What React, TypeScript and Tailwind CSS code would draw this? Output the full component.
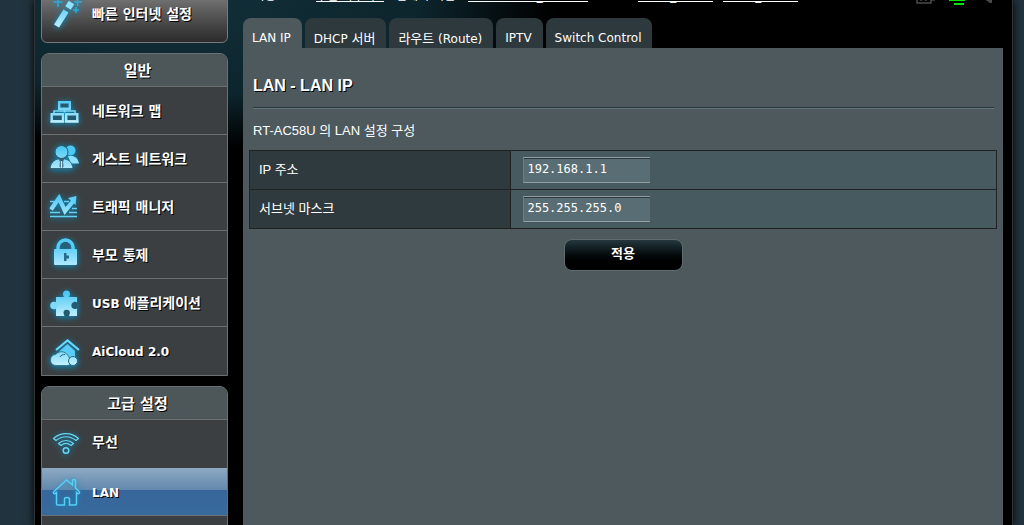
import { useState } from 'react'
import type { ReactNode } from 'react'
import clsx from 'clsx'

const textShadow = '[text-shadow:1px_1px_0_#000]'
const uiFont = "font-['DejaVu_Sans','Noto_Sans_CJK_KR',sans-serif]"
const bodyFont = "font-['Liberation_Sans','Noto_Sans_CJK_KR',sans-serif]"

function Icon({ children }: { children: ReactNode }) {
  return (
    <svg
      viewBox="0 0 32 32"
      className="h-8 w-8 shrink-0 overflow-visible [filter:drop-shadow(0_1px_3px_#0792c8)]"
      fill="none"
      aria-hidden="true"
    >
      <defs>
        <linearGradient id="glow" gradientUnits="userSpaceOnUse" x1="0" y1="2" x2="0" y2="30">
          <stop offset="0" stopColor="#3fc4f3" />
          <stop offset="1" stopColor="#c2f0ff" />
        </linearGradient>
      </defs>
      {children}
    </svg>
  )
}

const WandIcon = () => (
  <Icon>
    <path d="m7.500 28 9.500-15" stroke="url(#glow)" strokeWidth="6" />
    <path d="m19 10 3.500-5.500" stroke="#8fe0fb" strokeWidth="6.500" />
    <path d="M9 0v9M4.500 4h9M28.500 0v8M25 4h8M27 9v6M24 12h6" stroke="#2fa9d8" strokeWidth="1.500" />
  </Icon>
)

const NetworkIcon = () => (
  <Icon>
    <path d="M15.500 14v3.500M5 18v-2h21v2" stroke="#7fdcf8" strokeWidth="1.500" />
    <path
      d="M10.200 7.200h10.600v6.600H10.200zM2.700 19.200H14v7.100H2.700zM17.200 19.200h11.100v7.100H17.200z"
      fill="#235a70"
      stroke="url(#glow)"
      strokeWidth="2.400"
    />
    <path d="M1.500 26.800h13.700M16 26.800h13.500" stroke="#c2f0ff" strokeWidth="1.500" />
  </Icon>
)

const GuestIcon = () => (
  <Icon>
    <circle cx="21.500" cy="7.500" r="5" fill="#4cc8f3" />
    <path d="M19 13h4.500c4 .800 5.500 3.500 6.500 7.500h-8z" fill="#8fe0fa" />
    <circle cx="12.500" cy="9" r="6.500" fill="url(#glow)" stroke="#2d5565" />
    <path d="M1 25.500c1-6 4-8.500 8-9.500h7c4.500 1 7 3.500 8 9.500z" fill="url(#glow)" stroke="#2d5565" strokeWidth=".800" />
    <path d="M10 16h5l-1 3 .500 4.500-2 2.500-2-2.500.500-4.500z" fill="#315f72" />
    <path d="M12.500 18v7" stroke="#c9f2ff" strokeWidth="1.400" />
  </Icon>
)

const TrafficIcon = () => (
  <Icon>
    <path d="M1 10.500h4M15 10.500h5M1 17.500h1M23 17.500h5M1 21.500h10M20 21.500h8M1 25.500h27" stroke="#62d2f7" strokeWidth="1.600" />
    <path d="m2 18.500 8-11.500 6 13L25 9" stroke="url(#glow)" strokeWidth="4.200" />
    <path d="m19 7 8.500-2-1 9z" fill="#5fd0f7" />
  </Icon>
)

const LockIcon = () => (
  <Icon>
    <path d="M9 12V8.500a7.500 7.500 0 0 1 15 0V12" stroke="#55cbf5" strokeWidth="3.500" />
    <rect x="5" y="10" width="23" height="16" rx="1" fill="url(#glow)" />
    <path d="M15 14h2.500v2.500H20v3h-2.500V22H15z" fill="#256c88" />
  </Icon>
)

const PuzzleIcon = () => (
  <Icon>
    <path d="M7 10h21v19H7z" fill="url(#glow)" />
    <circle cx="17.500" cy="7" r="3.500" fill="#4cc8f3" />
    <path d="M16 8h3v3h-3z" fill="#5fcef5" />
    <circle cx="5" cy="18.500" r="3.800" fill="#7fdaf8" />
    <path d="M24 15.500c2-1.500 3 0 4.500 0v6c-1.500 0-2.500 1-4.500 0a3.500 3.500 0 0 1 0-6zM15 29.500c1-1.500-.500-1.800-.500-3.500a3.200 3.200 0 0 1 6.400 0c0 1.700-1.400 2-.400 3.500z" fill="#235a70" />
  </Icon>
)

const CloudIcon = () => (
  <Icon>
    <path d="M10.500 16 18.500 9l7.500 7v10H10.500z" fill="#59cdf5" />
    <path d="m7 15 11.500-9.500L30 15" stroke="#6ad6f8" strokeWidth="2.200" />
    <path
      d="M7 30.500c-3.500 0-5.500-2.500-5.500-5.500 0-3.500 2.500-5.500 5-5.500C10 15.500 16 16 18.500 20c2.500 2 3 7 1.500 10.500z"
      fill="url(#glow)"
      stroke="#286780"
      strokeWidth=".800"
    />
    <path d="M11 22c1-2 3-2.500 5-2.500" stroke="#286780" />
    <circle cx="24" cy="26" r="4.500" fill="url(#glow)" stroke="#286780" />
  </Icon>
)

const WifiIcon = () => (
  <Icon>
    <g stroke="#6bd5f5" strokeWidth="1.200" strokeLinejoin="round">
      <path d="M4.500 12.500c7-6.500 18-6.500 25 0l-2.500 2c-6-5-14-5-20 0z" />
      <path d="M9.500 17.500c4.500-4 10.500-4 15 0l-2.500 2c-3-2.500-7-2.500-10 0z" />
      <circle cx="17" cy="24.500" r="2.800" strokeWidth="1.500" />
    </g>
  </Icon>
)

const HouseIcon = () => (
  <Icon>
    <path
      d="M4.500 16 17.500 4l6 5V4.500c0-1.500 3-1.500 3 0V12l4 4c.500 1-1 2-2 1.500l-1-1V28c0 .700-.300 1-1 1h-6v-6c0-2-5-2-5 0v6h-7c-.700 0-1-.300-1-1V16.500l-1.500 1c-1 .500-2-.500-1.500-1.500z"
      stroke="#57cff8"
      strokeWidth="1.500"
    />
  </Icon>
)

const generalItems = [
  { id: 'map', icon: <NetworkIcon />, label: '네트워크 맵' },
  { id: 'guest', icon: <GuestIcon />, label: '게스트 네트워크' },
  { id: 'traffic', icon: <TrafficIcon />, label: '트래픽 매니저' },
  { id: 'parental', icon: <LockIcon />, label: '부모 통제' },
  { id: 'usb', icon: <PuzzleIcon />, label: <><span className="text-xs">USB </span>애플리케이션</> },
  { id: 'cloud', icon: <CloudIcon />, label: <span className="text-xs">AiCloud 2.0</span> },
]

const tabs = [
  { id: 'ip', label: 'LAN IP' },
  { id: 'dhcp', label: <>DHCP <span className="text-[13px]">서버</span></> },
  { id: 'route', label: <><span className="text-[13px]">라우트</span> (Route)</> },
  { id: 'iptv', label: 'IPTV' },
  { id: 'switch', label: 'Switch Control' },
]

function MenuHeader({ children }: { children: ReactNode }) {
  return (
    <h2 className={clsx('flex h-[33px] items-center justify-center border-b border-[#6b7071] bg-[#4d5659] pt-[2px] pl-[6px] text-[15px] font-bold', textShadow)}>
      {children}
    </h2>
  )
}

function MenuLink({ icon, children, className }: { icon: ReactNode; children: ReactNode; className?: string }) {
  return (
    <a href="#" className={clsx('flex h-12 items-center gap-[11px] border-[#6b7071] pl-[7px] text-sm font-bold whitespace-nowrap', textShadow, className)}>
      {icon}
      <span>{children}</span>
    </a>
  )
}

function Sidebar() {
  return (
    <nav className="-mt-4 flex w-[187px] shrink-0 flex-col gap-[10px]">
      <a
        href="#"
        className={clsx(
          'flex h-[59px] shrink-0 items-center gap-[11px] rounded-md border border-[#777b7c] bg-linear-to-b from-[#8a8a8a] to-[#2b2b2b] pl-[7px] text-sm font-bold',
          textShadow
        )}
      >
        <WandIcon />
        빠른 인터넷 설정
      </a>

      <section className="shrink-0 overflow-hidden rounded-t-lg border border-[#6b7071] bg-[#3b3f41]">
        <MenuHeader>일반</MenuHeader>
        {generalItems.map((item) => (
          <MenuLink key={item.id} icon={item.icon} className="border-b last:border-b-0">
            {item.label}
          </MenuLink>
        ))}
      </section>

      <section className="shrink-0 overflow-hidden rounded-t-lg border border-[#6b7071] bg-[#3b3f41]">
        <MenuHeader>고급 설정</MenuHeader>
        <MenuLink icon={<WifiIcon />} className="pb-1">무선</MenuLink>
        <MenuLink
          icon={<HouseIcon />}
          className="border-b bg-[linear-gradient(#8ea9c3,#6389ad_46%,#37669a_46%,#386a9c)]"
        >
          <span className="text-xs">LAN</span>
        </MenuLink>
        <div className="h-12" />
      </section>
    </nav>
  )
}

function StatusLink({ children, className }: { children: ReactNode; className?: string }) {
  return (
    <a href="#" className={clsx('h-[14px] border-b border-white', className)}>
      {children}
    </a>
  )
}

function StatusBar() {
  return (
    <header className="h-[18px] overflow-hidden">
      <div className="-mt-[18px] flex h-5 items-end text-xs leading-4 whitespace-nowrap">
        <span className="ml-[11px] h-[14px] w-[62px]">작동 모드:</span>
        <StatusLink className="w-[68px]">무선 라우터</StatusLink>
        <span className="ml-3 h-[14px] w-[72px]">펌웨어 버전:</span>
        <StatusLink className="w-[120px]">3.0.0.4.380_7378</StatusLink>
        <span className="ml-3 h-[14px] w-[38px]">SSID:</span>
        <StatusLink className="w-[75px]">ASUS_2G</StatusLink>
        <StatusLink className="ml-[10px] w-[75px]">ASUS_5G</StatusLink>
        <svg viewBox="0 0 80 22" className="-mb-1 ml-auto mr-[10px] h-[22px] w-20 shrink-0" aria-hidden="true">
          <path d="M4 8h14v11H4zM8 8v9M13 8v9M18 16h4" fill="none" stroke="#4b4b4b" strokeWidth="1.500" />
          <path d="M40 4h12v13H40zM36 15h4v2h-4zM41 19h10v2H41z" fill="#00e600" />
          <path d="M70 14h9v5h-2z" fill="#4b4b4b" />
        </svg>
      </div>
    </header>
  )
}

function AddressRow({ id, label, value, onChange }: { id: string; label: string; value: string; onChange: (value: string) => void }) {
  return (
    <tr className="h-[39px]">
      <th scope="row" className="w-[35%] border border-[#222] bg-[#2f3a3e] pl-[9px] text-left font-normal">
        <label htmlFor={id}>{label}</label>
      </th>
      <td className="border border-[#222] bg-[#475a5f] pl-3">
        <input
          id={id}
          value={value}
          onChange={(e) => onChange(e.target.value)}
          className="block h-[26px] w-[127px] border-y border-l border-y-[#929ea1] border-l-[#6f7d81] bg-[#596e74] pb-[2px] pl-[3px] font-['DejaVu_Sans_Mono',monospace] text-xs shadow-[inset_0_1px_0_#2b373b] outline-none"
        />
      </td>
    </tr>
  )
}

export default function App() {
  const [activeTab, setActiveTab] = useState('ip')
  const [ip, setIp] = useState('192.168.1.1')
  const [mask, setMask] = useState('255.255.255.0')

  return (
    <div className={clsx('h-screen overflow-hidden bg-[#21333e] pr-[11px] pl-[34px] text-white', uiFont)}>
      <div className="flex h-full gap-[15px] border-x border-[#333] bg-black bg-[radial-gradient(ellipse_390px_150px_at_130px_0px,#12303a,#0d252d_65%,transparent)] pr-[9px] pl-[6px] shadow-[0_0_8px_#000]">
        <Sidebar />

        <main className="flex min-w-0 flex-1 flex-col">
          <StatusBar />

          <div role="tablist" className="flex gap-[3px]">
            {tabs.map((tab) => (
              <button
                key={tab.id}
                type="button"
                role="tab"
                aria-selected={tab.id === activeTab}
                onClick={() => setActiveTab(tab.id)}
                className={clsx(
                  'h-[30px] rounded-t-lg pt-[11px] pr-[11px] pl-[9px] text-xs leading-[19px] whitespace-nowrap',
                  tab.id === activeTab ? 'bg-[#4d595d]' : 'bg-[#2e393d]'
                )}
              >
                {tab.label}
              </button>
            ))}
          </div>

          <div className={clsx('flex-1 bg-[#4d595d] px-[6px] text-[13px] leading-5', bodyFont)}>
            <h1 className={clsx('mr-[3px] ml-[4px] border-b border-[#2c3539] pt-7 pb-[11px] text-base leading-5 font-bold', textShadow)}>
              LAN - LAN IP
            </h1>
            <div className="mr-[3px] ml-[4px] border-t border-[#637980] pt-3 pb-[9px]">RT-AC58U 의 LAN 설정 구성</div>

            <form onSubmit={(e) => e.preventDefault()}>
              <table className="w-full border-collapse">
                <tbody>
                  <AddressRow id="lan-ip" label="IP 주소" value={ip} onChange={setIp} />
                  <AddressRow id="lan-mask" label="서브넷 마스크" value={mask} onChange={setMask} />
                </tbody>
              </table>
              <button
                type="submit"
                className={clsx(
                  'mx-auto mt-[10px] block h-8 w-[119px] rounded-lg border border-[#5f6b6f] bg-linear-to-b from-[#24383e] to-black to-90% pb-[2px] font-bold',
                  textShadow
                )}
              >
                적용
              </button>
            </form>
          </div>
        </main>
      </div>
    </div>
  )
}
